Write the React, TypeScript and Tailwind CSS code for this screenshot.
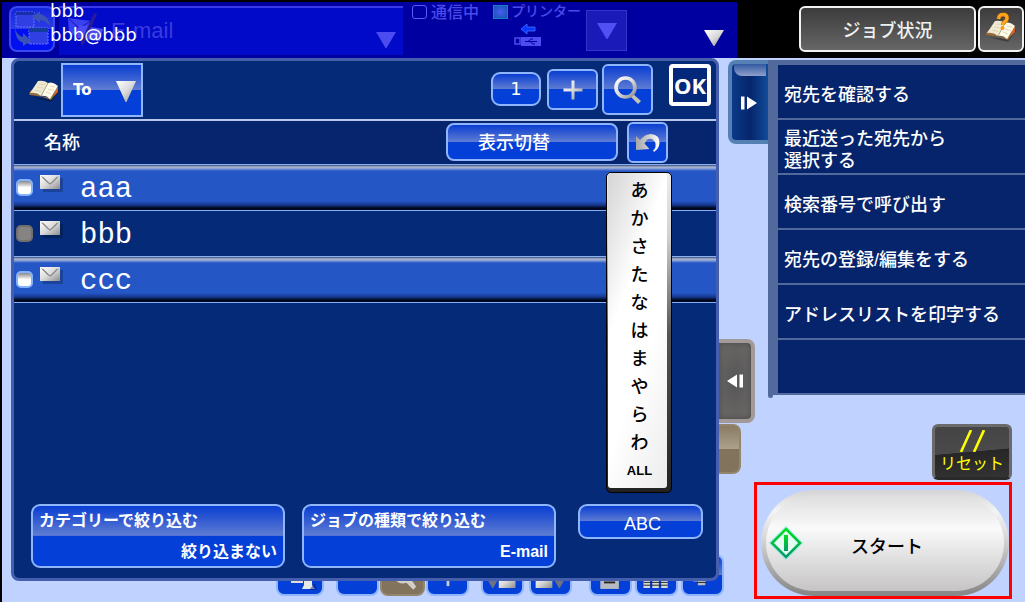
import type { ReactNode } from "react";
import clsx from "clsx";

const glossy =
  "border-2 border-[#8fb6fd] bg-[linear-gradient(to_bottom,#0a3ed2_0%,#5f7cd2_49%,#0440d8_50%,#0440d8_100%)] text-white";

const contacts = [
  { name: "aaa", highlighted: true, disabled: false },
  { name: "bbb", highlighted: false, disabled: true },
  { name: "ccc", highlighted: true, disabled: false },
];

const kanaIndex = ["あ", "か", "さ", "た", "な", "は", "ま", "や", "ら", "わ"];

const menuItems = [
  "宛先を確認する",
  "最近送った宛先から\n選択する",
  "検索番号で呼び出す",
  "宛先の登録/編集をする",
  "アドレスリストを印字する",
  "",
];

function MetalGradient({ id }: { id: string }) {
  return (
    <defs>
      <linearGradient id={id} x1="0" y1="0" x2="1" y2="1">
        <stop offset="0" stopColor="#ffffff" />
        <stop offset="0.5" stopColor="#dadada" />
        <stop offset="1" stopColor="#8c8c8c" />
      </linearGradient>
    </defs>
  );
}

function TriangleDown({ className, fill }: { className?: string; fill?: string }) {
  return (
    <svg viewBox="0 0 20 21" preserveAspectRatio="none" className={className} aria-hidden="true">
      <MetalGradient id="metal-triangle" />
      <path d="M0 0H20L10.500 21H9.500Z" fill={fill ?? "url(#metal-triangle)"} />
    </svg>
  );
}

function BookIcon({ question = false, className }: { question?: boolean; className?: string }) {
  return (
    <svg viewBox="0 0 30 24" className={className} aria-hidden="true">
      <path d="M2 18L22 23L30 12L29 10L21 20Z" fill="#000" opacity="0.3" />
      <path d="M0 15L2 11L12 17L21 19L29 8L29 12L22 21L12 17.500L1 16Z" fill="#9a6a34" />
      <path d="M26 11L29 8L29 13L25 17Z" fill="#d9622b" />
      <path d="M1 14L9 2Q15 1 19 4L12 17Q7 13 1 14Z" fill="#efe9d2" />
      <path d="M19 4Q24 2 29 7L21 20Q17 16 12 17Z" fill="#fffbe9" />
      <path d="M19 4L12 17" stroke="#b8ac88" strokeWidth="1" />
      <path
        d="M10 5L16 5.500M8 8L14 9M6 11L12 12.500M21 7L26 8M19 10L25 11.500M17 13L22 15"
        stroke="#d8d0b4"
        strokeWidth="0.800"
      />
      {question && (
        <>
          <path
            d="M12.500 0Q13 -4.500 17 -4.500Q21 -4.500 21 -1Q21 1.500 18.500 3Q17 4 17 6"
            fill="none"
            stroke="#c46c00"
            strokeWidth="4"
          />
          <path
            d="M12.500 0Q13 -4.500 17 -4.500Q21 -4.500 21 -1Q21 1.500 18.500 3Q17 4 17 6"
            fill="none"
            stroke="#ffa51e"
            strokeWidth="3"
          />
          <circle cx="16.500" cy="9" r="2" fill="#ff9a10" />
        </>
      )}
    </svg>
  );
}

function SwapIcon() {
  return (
    <svg viewBox="0 0 40 38" className="h-[38px] w-10" aria-hidden="true">
      <rect x="4" y="2" width="18" height="15" fill="#2f3fe4" stroke="#6d74ff" strokeDasharray="2 1" />
      <rect x="4" y="2" width="18" height="3" fill="#1730a8" />
      <rect x="17" y="18" width="19" height="16" fill="#2f3fe4" stroke="#6d74ff" strokeDasharray="2 1" />
      <rect x="17" y="18" width="19" height="4" fill="#143c9c" />
      <path d="M20 7L28 1V4Q37 6 38 16Q33 10 28 10V13Z" fill="#3a53b4" />
      <path d="M3 18Q5 26 11 27V23L19 31L11 36V33Q3 30 3 18Z" fill="#3a53b4" />
    </svg>
  );
}

function MailPenIcon() {
  return (
    <svg viewBox="0 0 36 34" className="h-[34px] w-9 shrink-0" aria-hidden="true">
      <path d="M1 6L24 9L22 25L2 22Z" fill="#3a3ff0" />
      <path d="M2 7L12 16L24 9" fill="none" stroke="#1414b8" />
      <path d="M12 13L36 17L33 29L10 26Z" fill="#4a4df5" />
      <path d="M27 1L30 2L17 32L14 34L14 30Z" fill="#2b1a9c" />
    </svg>
  );
}

function Envelope() {
  return (
    <svg viewBox="0 0 23 17" className="h-[17px] w-[23px]" aria-hidden="true">
      <MetalGradient id="metal-envelope" />
      <rect x="3" y="3" width="20" height="14" fill="#000" opacity="0.220" />
      <rect width="20" height="14" fill="url(#metal-envelope)" />
      <path d="M1 1L7.500 7.500M19 1L12.500 7.500" stroke="#bdbdbd" />
      <path d="M2.500 2L8 7.500L10 9L12 7.500L17.500 2" fill="none" stroke="#8b8b8b" strokeWidth="1.300" />
    </svg>
  );
}

function TopBar() {
  return (
    <header className="flex border-t-2 border-black bg-black">
      <div className="relative flex h-14 min-w-0 flex-1 bg-[#0000a0] pt-1 pl-[7px]">
        <button
          aria-label="切替"
          className="flex h-[46px] w-[46px] shrink-0 items-center justify-center rounded-lg border-2 border-[#3a48f0] bg-[linear-gradient(to_bottom,#1426dc_0%,#2b3ce4_49%,#000ff0_50%,#0010f0_100%)]"
        >
          <SwapIcon />
        </button>
        <div className="ml-1 flex h-[49px] min-w-0 flex-1 items-start border-t-2 border-[#3a3ae8] bg-[#000ac8] pr-[7px] pl-2">
          <div className="mt-1">
            <MailPenIcon />
          </div>
          <span className="mt-[9px] ml-2 flex-1 text-[22px] leading-7 text-[#3b3be0]">E-mail</span>
          <TriangleDown className="mt-6 h-4 w-5" fill="#4b4bf0" />
        </div>
        <div className="ml-2 flex h-12 w-[326px] shrink-0 text-[#4a4ae8]">
          <div className="flex w-[82px] items-start gap-1 pl-px text-base leading-5 font-medium">
            <span className="-mt-px h-[14px] w-[15px] rounded-[3px] border border-[#5a5af4]" />
            <span className="-mt-[3px]">通信中</span>
          </div>
          <div className="w-[93px]">
            <div className="flex items-start gap-[3px] text-sm leading-4">
              <span className="-mt-px h-[14px] w-[15px] border border-[#1680c0] bg-[radial-gradient(#4a5cf8,#1058a8)]" />
              <span className="-mt-[3px] font-medium">プリンター</span>
            </div>
            <svg viewBox="0 0 28 24" className="mt-1 ml-[21px] h-6 w-7" aria-label="USB">
              <path d="M7 6L13 1V4H21V8H13V11Z" fill="#0838ff" stroke="#4a6cff" strokeWidth="0.800" />
              <rect x="1" y="15" width="5" height="6" fill="none" stroke="#4c4cf0" strokeWidth="1.500" />
              <rect x="7" y="14" width="20" height="9" fill="#4c4cf0" />
              <path d="M11 18.500H23M14 18.500L17 16H19M16 18.500L19 21H21" fill="none" stroke="#0000a0" />
            </svg>
          </div>
          <button
            aria-label="メニュー"
            className="mt-1 flex h-[41px] w-[41px] items-center justify-center border border-[#3434c8] bg-[#1a1ab8]"
          >
            <TriangleDown className="h-4 w-5" fill="#5050f4" />
          </button>
          <TriangleDown className="mt-6 ml-[77px] h-4 w-5" />
        </div>
        <p className="absolute -top-[3px] left-12 font-['DejaVu_Sans'] text-lg leading-6 text-white">
          bbb
          <br />
          bbb@bbb
        </p>
      </div>
      <div className="flex w-[288px] shrink-0 justify-end gap-[2px] pt-1 pr-px">
        <button className="h-[46px] w-[177px] rounded-md border-2 border-[#f2f2f2] bg-linear-to-b from-[#3c3c3c] to-[#666] pt-1 text-lg font-medium text-[#f0f0f0]">
          ジョブ状況
        </button>
        <button
          aria-label="ヘルプ"
          className="flex h-[46px] w-[46px] items-center justify-center rounded-md border-2 border-[#f2f2f2] bg-linear-to-b from-[#3c3c3c] to-[#666]"
        >
          <BookIcon question className="mt-1 h-6 w-[30px] overflow-visible" />
        </button>
      </div>
    </header>
  );
}

function AddressToolbar() {
  return (
    <div className="flex h-[58px] items-start pr-[5px] pl-[15px]">
      <BookIcon className="mt-[18px] h-6 w-[30px]" />
      <div className="relative mt-[2px] ml-[2px]">
        <select
          aria-label="送信先の種類"
          className={clsx(
            "h-[54px] w-[82px] appearance-none pl-[10px] font-['DejaVu_Sans'] text-[15px] font-bold outline-none",
            glossy,
          )}
        >
          <option>To</option>
        </select>
        <TriangleDown className="pointer-events-none absolute top-[18px] right-[7px] h-[21px] w-5" />
      </div>
      <div className="flex-1" />
      <button className={clsx("mt-[11px] h-[34px] w-[50px] rounded-[9px] font-['DejaVu_Sans'] text-lg", glossy)}>
        1
      </button>
      <button
        aria-label="追加"
        className={clsx("mt-2 ml-[6px] flex h-[41px] w-[51px] items-center justify-center rounded-md", glossy)}
      >
        <svg viewBox="0 0 20 20" className="h-5 w-5" aria-hidden="true">
          <MetalGradient id="metal-plus" />
          <path
            d="M8.500 0.500H11.500V8.500H19.500V11.500H11.500V19.500H8.500V11.500H0.500V8.500H8.500Z"
            fill="url(#metal-plus)"
          />
        </svg>
      </button>
      <button
        aria-label="検索"
        className={clsx("mt-[3px] ml-1 flex h-[51px] w-[51px] items-center justify-center rounded-md", glossy)}
      >
        <svg viewBox="0 0 28 28" className="h-7 w-7" aria-hidden="true">
          <MetalGradient id="metal-search" />
          <path d="M18 17L27 25L24 28L15.500 19.500Z" fill="#c4c2ba" />
          <circle cx="11.500" cy="11.500" r="9.500" fill="none" stroke="url(#metal-search)" strokeWidth="3.600" />
        </svg>
      </button>
      <button className="mt-[3px] ml-4 flex h-[42px] w-[42px] items-center justify-center rounded-[4px] border-4 border-white bg-[#04287a] font-['Noto_Sans'] text-[22px] font-bold text-white">
        OK
      </button>
    </div>
  );
}

function ContactList() {
  return (
    <ul>
      {contacts.map((c) => (
        <li
          key={c.name}
          className={clsx(
            "h-[46px] border-b border-[#84aef8]",
            c.highlighted
              ? "bg-[linear-gradient(to_bottom,#3c4c78_0,#a8b4cc_2px,#9caed8_3px,#2456c6_6px,#2456c6_36px,#16388c_40px,#000820_43px,#000820_45px)]"
              : "bg-[#052b78]",
          )}
        >
          <label className="flex h-full items-start pl-[2px]">
            <input
              type="checkbox"
              disabled={c.disabled}
              className={clsx(
                "mt-[14px] h-[17px] w-[17px] appearance-none rounded-[5px] border-2",
                c.disabled
                  ? "border-[#72706e] bg-[#858483]"
                  : "border-[#84b2fc] bg-linear-to-b from-[#8a8a8a] via-white via-50% to-white",
              )}
            />
            <span className="mt-[10px] ml-[7px]">
              <Envelope />
            </span>
            <span className="mt-[9px] ml-[17px] font-['Liberation_Mono'] text-[29px] leading-8 text-white">
              {c.name}
            </span>
          </label>
        </li>
      ))}
    </ul>
  );
}

function KanaStrip() {
  return (
    <nav
      aria-label="索引"
      className="absolute top-[7px] right-11 flex w-[66px] flex-col rounded-[5px] border border-black bg-[linear-gradient(to_bottom,#eeeeee_0,#d0d0d0_20%,#555_50%,#222_100%)] pr-1 pb-1 pl-px"
    >
      <div className="flex flex-col rounded-[3px] bg-[linear-gradient(110deg,#d4d4d4,#fff_35%,#fff_60%,#ececec)] pt-1 pb-[3px]">
        {kanaIndex.map((k) => (
          <button key={k} className="h-7 pl-1 text-[18px] leading-7 font-medium text-black">
            {k}
          </button>
        ))}
        <button className="h-7 pl-1 text-[13px] font-bold text-black">ALL</button>
      </div>
    </nav>
  );
}

function FilterButton({ title, value }: { title: string; value: string }) {
  return (
    <button
      className={clsx(
        "flex h-16 w-[254px] flex-col justify-between rounded-[9px] px-[6px] pt-[3px] pb-[2px] text-base leading-6 font-bold",
        glossy,
      )}
    >
      <span className="self-start">{title}</span>
      <span className="self-end">{value}</span>
    </button>
  );
}

function AddressPanel() {
  return (
    <section className="relative z-10 ml-[9px] flex flex-1 flex-col rounded-lg border-[3px] border-[#465eae] bg-[#052b78]">
      <AddressToolbar />
      <div className="flex h-[46px] items-start border-t-2 border-b border-t-[#b8c8ea] border-b-[#84aef8] bg-[#06256e] pr-12 pl-[30px]">
        <h2 className="mt-2 flex-1 text-lg leading-7 font-medium text-white">名称</h2>
        <button
          className={clsx("mt-[2px] h-[38px] w-[172px] rounded-lg pt-[2px] pr-[33px] text-right text-lg font-medium", glossy)}
        >
          <span className="inline-block w-[105px] text-left">表示切替</span>
        </button>
        <button
          aria-label="戻す"
          className={clsx("mt-px ml-[9px] flex h-[41px] w-[41px] items-center justify-center rounded-md", glossy)}
        >
          <svg viewBox="0 0 24 18" className="h-[18px] w-6" aria-hidden="true">
            <defs>
              <linearGradient id="metal-undo" x1="0" y1="0" x2="1" y2="0">
                <stop offset="0" stopColor="#a8a8a8" />
                <stop offset="0.500" stopColor="#cccccc" />
                <stop offset="1" stopColor="#ffffff" />
              </linearGradient>
            </defs>
            <path
              d="M0 2L4 6Q9 0 15 0Q24 1 23.500 9Q23 15 18 18L17 16.500Q21 13 19 8Q16 3 11 5.500L8.500 9.500L13.500 15L0 16Z"
              fill="url(#metal-undo)"
            />
          </svg>
        </button>
      </div>
      <div className="relative min-h-[336px] flex-1">
        <ContactList />
        <KanaStrip />
      </div>
      <div className="flex items-start gap-[17px] pr-[13px] pb-[10px] pl-[17px]">
        <FilterButton title="カテゴリーで絞り込む" value="絞り込まない" />
        <FilterButton title="ジョブの種類で絞り込む" value="E-mail" />
        <button className={clsx("ml-auto h-[35px] w-[125px] rounded-[9px] pt-1 pl-1 text-lg", glossy)}>ABC</button>
      </div>
    </section>
  );
}

function ToolButton({ label, className, children }: { label: string; className?: string; children?: ReactNode }) {
  return (
    <button aria-label={label} className={clsx("h-[42px] rounded-lg", className ?? clsx("w-[43px]", glossy))}>
      <svg viewBox="0 0 42 38" className="mx-auto h-[38px] w-full" aria-hidden="true">
        <MetalGradient id="metal-tool" />
        {children}
      </svg>
    </button>
  );
}

function BottomToolbar() {
  return (
    <div className="-mt-[27px] -mr-[5px] mb-[6px] flex justify-end">
      <ToolButton label="宛先" className={clsx("w-12", glossy)}>
        <path d="M12 20H24V27H12Z" fill="#ddd" />
        <path d="M25 24H33V29L36 33H23L25 29Z" fill="#e8e8e4" />
        <path d="M36 27L38 34H30Z" fill="#001f80" opacity="0.500" />
      </ToolButton>
      <div className="ml-3 flex gap-px">
        <ToolButton label="一覧" />
        <ToolButton label="詳細検索" className="w-[45px] border-2 border-[#94866c] bg-[#82735d]">
          <path d="M12 22Q18 30 25 27L32 34L35 31L29 22Z" fill="#d2cec8" />
        </ToolButton>
        <ToolButton label="追加">
          <path d="M20 12H23V31H20Z" fill="#c8ccd8" />
        </ToolButton>
      </div>
      <div className="ml-3 flex gap-[5px]">
        <ToolButton label="読み込み">
          <path d="M5 24H16L11 33H10Z" fill="#6d7480" />
          <path d="M17 18H35V33H17Z" fill="url(#metal-tool)" />
        </ToolButton>
        <ToolButton label="書き出し">
          <path d="M5 18H23V33H5Z" fill="url(#metal-tool)" />
          <path d="M25 24H36L31 33H30Z" fill="#6d7480" />
        </ToolButton>
      </div>
      <div className="ml-[17px] flex gap-[3px]">
        <ToolButton label="文書">
          <path d="M10 8H30V34H10Z" fill="#b8bcc0" />
          <path d="M14 27H26" stroke="#222" strokeWidth="2" />
        </ToolButton>
        <ToolButton label="表">
          <path d="M7 20H14V33H7ZM16.500 20H23.500V33H16.500ZM26 20H33V33H26Z" fill="#d8d8d4" />
          <path d="M7 24H33M7 27H33M7 30H33" stroke="#222" strokeWidth="1" />
        </ToolButton>
        <ToolButton label="構成">
          <path d="M11 24H25V26H11ZM16 24H24V30H16Z" fill="#b8bcc0" />
          <path d="M15 27H25" stroke="#222" />
        </ToolButton>
      </div>
    </div>
  );
}

function SideTabs() {
  return (
    <div className="flex w-[49px] shrink-0 flex-col">
      <button
        aria-label="メニューを閉じる"
        className="mt-[2px] flex h-[84px] w-10 flex-col self-end rounded-l-lg border-4 border-r-0 border-[#5580b4] bg-linear-to-r from-[#0a3a88] via-[#06256c] to-[#114c98] text-white"
      >
        <span className="ml-[2px] h-3 w-8 rounded-bl-lg bg-linear-to-b from-[#3158a0] to-[#8fa0cc]" />
        <svg viewBox="0 0 16 14" className="mt-5 ml-[9px] h-[14px] w-4" aria-hidden="true">
          <path d="M0 0.500H3.500V13.500H0ZM6 0.500L16 7L6 13.500Z" fill="#fff" />
        </svg>
      </button>
      <button
        aria-label="パネルを開く"
        className="mt-[195px] flex h-[84px] w-9 items-center rounded-r-lg border-4 border-l-0 border-[#a29a98] bg-[radial-gradient(#565656,#6e6b6a)] pl-2 shadow-[inset_0_0_6px_#444]"
      >
        <svg viewBox="0 0 16 14" className="h-[14px] w-4" aria-hidden="true">
          <path d="M16 0.500H12.500V13.500H16ZM10 0.500L0 7L10 13.500Z" fill="#fff" />
        </svg>
      </button>
      <button
        aria-label="補助"
        className="mt-px h-[50px] w-[22px] rounded-r-lg border-2 border-l-0 border-[#94866c] bg-[linear-gradient(to_bottom,#8a7b64_0%,#aca18c_49%,#82735d_50%)]"
      />
    </div>
  );
}

function StartButton() {
  return (
    <div className="mt-[2px] mr-[13px] -ml-[14px] h-[117px] border-[3px] border-[#ff0000] pt-[5px] pl-1">
      <button className="flex h-[106px] w-full rounded-full bg-[linear-gradient(to_bottom,#d4d4d4_0%,#f4f4f4_20%,#d8d8d8_45%,#b0b0b0_70%,#858585_100%)] p-[5px]">
        <span className="relative flex flex-1 items-center justify-center self-stretch rounded-full bg-linear-to-b from-[#dedede] via-[#fafafa] via-35% to-[#c6c4c4] text-lg font-medium text-black">
          <svg viewBox="0 0 36 36" className="absolute left-[2px] h-9 w-9" aria-hidden="true">
            <defs>
              <linearGradient id="go" x1="0" y1="0" x2="0" y2="1">
                <stop offset="0" stopColor="#00e020" />
                <stop offset="1" stopColor="#009c68" />
              </linearGradient>
            </defs>
            <path d="M18 4L32 18L18 32L4 18Z" fill="none" stroke="#7fe8f4" strokeWidth="5" opacity="0.500" />
            <path d="M18 4L32 18L18 32L4 18Z" fill="#e6fbf4" stroke="url(#go)" strokeWidth="2.600" />
            <path d="M16 10H20V26H16Z" fill="url(#go)" />
          </svg>
          <span className="pt-2 pl-1">スタート</span>
        </span>
      </button>
    </div>
  );
}

function SideMenu() {
  return (
    <aside className="flex w-[257px] shrink-0 flex-col">
      <ul className="mt-[2px] border-t-[5px] border-l-[10px] border-[#52699b] bg-[#06246b]">
        {menuItems.map((text, i) => (
          <li key={i} className="h-[55px] border-b-2 border-[#52699b]">
            {text && (
              <a
                href="#"
                className="flex h-full items-center pt-[6px] pl-[6px] text-lg leading-[22px] font-medium whitespace-pre-line text-white"
              >
                {text}
              </a>
            )}
          </li>
        ))}
      </ul>
      <span className="h-[3px] w-[5px] rounded-b-sm bg-[#52699b]" />
      <button className="mt-[26px] mr-[13px] flex h-14 w-20 flex-col items-center self-end rounded-md border-[3px] border-[#6a6a6a] border-b-[#2a2a2a] bg-[linear-gradient(175deg,#444_0%,#4a4a4a_49%,#262626_50%,#333_100%)] pt-[3px] text-[#ffff00]">
        <svg viewBox="0 0 26 22" className="h-[22px] w-[26px]" aria-hidden="true">
          <path d="M2 22L12 0M15 22L25 0" stroke="#ffff00" strokeWidth="2.600" />
        </svg>
        <span className="text-base leading-6 whitespace-nowrap">リセット</span>
      </button>
      <StartButton />
    </aside>
  );
}

export default function App() {
  return (
    <div
      lang="ja"
      className="flex min-h-screen flex-col border-l-2 border-black bg-[#c0d2ff] font-['Liberation_Sans','Noto_Sans_CJK_JP',sans-serif]"
    >
      <TopBar />
      <main className="flex flex-1">
        <div className="flex min-w-0 flex-1 flex-col">
          <AddressPanel />
          <BottomToolbar />
        </div>
        <SideTabs />
        <SideMenu />
      </main>
    </div>
  );
}
